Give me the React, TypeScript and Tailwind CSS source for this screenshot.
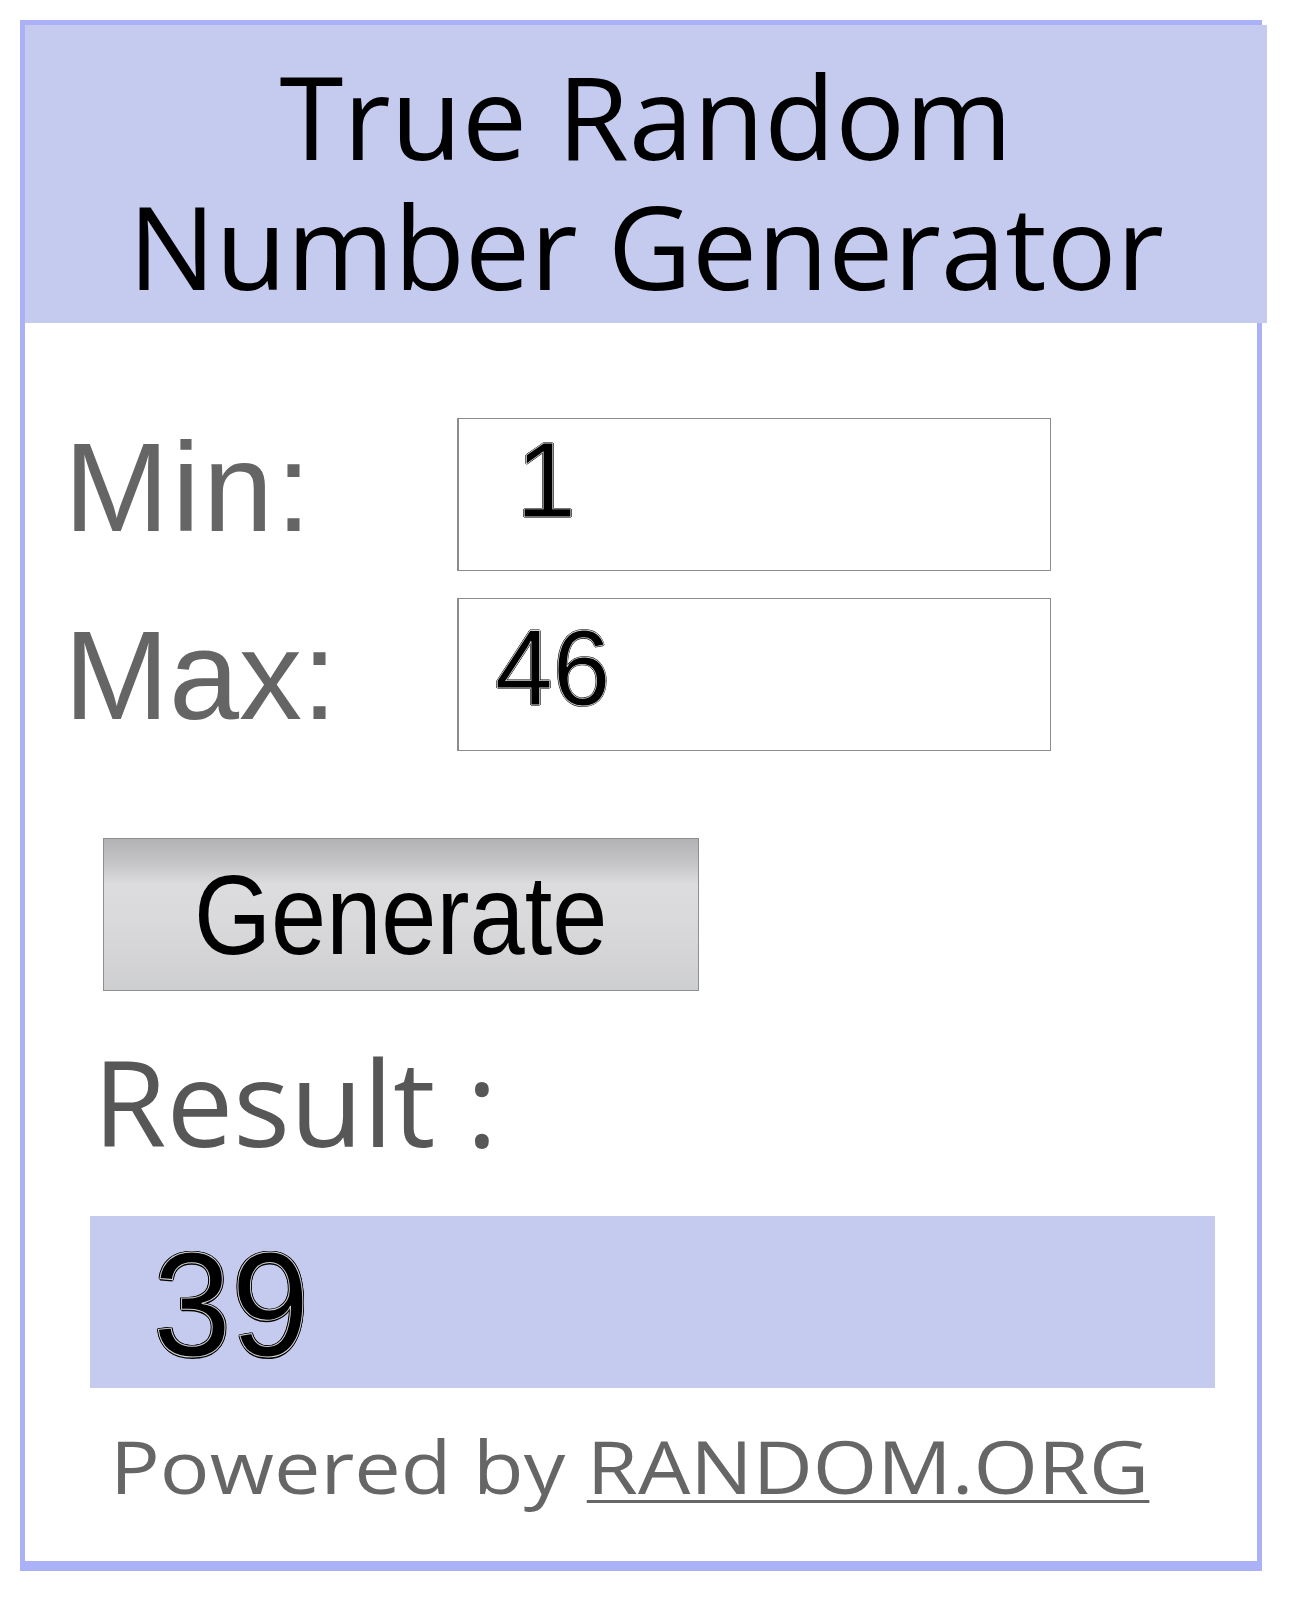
import React from "react";

const digitOutline =
  "text-black [-webkit-text-stroke:0.8px_#d4d4d4] [text-shadow:1px_0_0_#000,-1px_0_0_#000,0_1px_0_#000,0_-1px_0_#000]";

const bigOutline =
  "text-black [-webkit-text-stroke:1px_#d4d4d4] [text-shadow:1.5px_0_0_#000,-1.5px_0_0_#000,0_1.5px_0_#000,0_-1.5px_0_#000,1px_1px_0_#000,-1px_1px_0_#000,1px_-1px_0_#000,-1px_-1px_0_#000]";

export default function App() {
  return (
    <div className="w-[1290px] min-h-[1600px] bg-white pt-[20px] pl-[20px]">
      <div className="w-[1242px] h-[1551px] border-[5px] border-b-[10px] border-[#abb1f7] flex flex-col">
        {/* title band, runs a few px past the right border like the original */}
        <div className="h-[298px] -mr-[10px] bg-[#c5cbee] pt-[25px] text-center text-[116px] font-normal text-black font-['Open_Sans',sans-serif]">
          <div className="h-[130px] leading-[130px]">True Random</div>
          <div className="h-[130px] leading-[130px]">Number Generator</div>
        </div>

        <div className="flex flex-col font-['Liberation_Sans',Arial,sans-serif]">
          {/* Min */}
          <div className="mt-[95px] flex items-start pl-[39px]">
            <span className="mt-[7px] w-[393px] text-[126px] leading-none tracking-[3px] text-[#656565]">
              Min:
            </span>
            <div className="w-[594px] h-[153px] border border-l-2 border-[#8c8c8c] bg-white pt-[7px] pl-[57px]">
              <span className={`text-[108px] leading-none ${digitOutline}`}>1</span>
            </div>
          </div>

          {/* Max */}
          <div className="mt-[27px] flex items-start pl-[39px]">
            <span className="mt-[15px] w-[393px] text-[126px] leading-none text-[#656565]">
              Max:
            </span>
            <div className="w-[594px] h-[153px] border border-l-2 border-[#8c8c8c] bg-white pt-[15px] pl-[36px]">
              <span className={`inline-block origin-left scale-x-[0.96] text-[108px] leading-none ${digitOutline}`}>
                46
              </span>
            </div>
          </div>

          {/* Generate */}
          <button
            type="button"
            className="mt-[87px] ml-[78px] w-[596px] h-[153px] flex items-center justify-center border border-[#8f8f8f] bg-[linear-gradient(to_bottom,#b3b3b5_0%,#c2c2c4_14%,#dcdcde_30%,#dadadc_52%,#d4d4d6_78%,#cecfd1_100%)]"
          >
            <span className="inline-block scale-x-[0.87] text-[114px] leading-none text-black">
              Generate
            </span>
          </button>

          {/* Result */}
          <div className="mt-[51px] pl-[68px] text-[119px] leading-none text-[#575757] font-['Open_Sans',sans-serif]">
            Result :
          </div>

          <div className="mt-[55px] ml-[65px] w-[1125px] h-[172px] bg-[#c5cbee] pt-[15px] pl-[63px]">
            <span className={`inline-block origin-left scale-x-[0.95] text-[148px] leading-none ${bigOutline}`}>
              39
            </span>
          </div>

          {/* footer */}
          <div className="mt-[41px] pl-[85px] font-['Open_Sans',sans-serif]">
            <p className="inline-block origin-left scale-x-[1.135] text-[73px] leading-none text-[#666666] whitespace-nowrap">
              Powered by{" "}
              <a
                href="#"
                className="underline decoration-[3px] underline-offset-[6px] text-[#666666]"
              >
                RANDOM.ORG
              </a>
            </p>
          </div>
        </div>
      </div>
    </div>
  );
}
